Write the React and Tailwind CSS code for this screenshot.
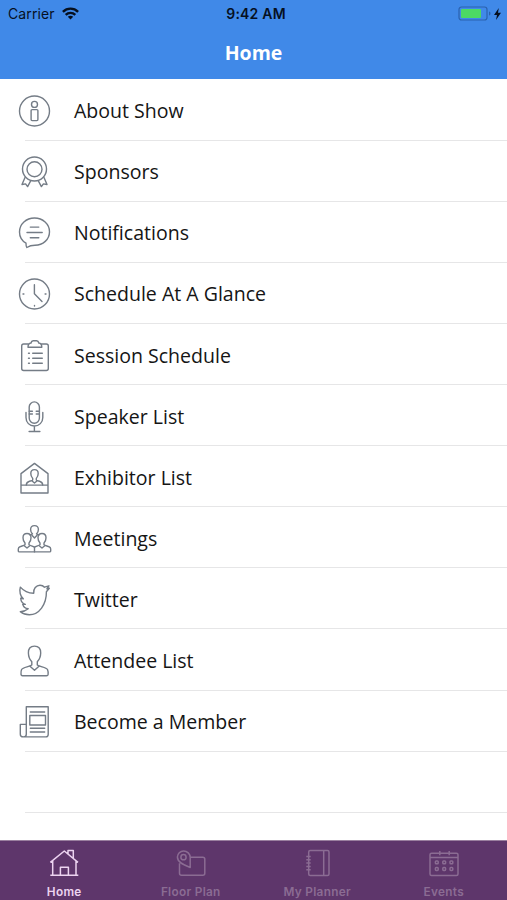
const ICONS = {
  about: (
    <>
      <circle cx="18" cy="18" r="15" />
      <circle cx="18" cy="11.400" r="3" />
      <rect x="14.600" y="16.600" width="6.800" height="11" rx="1" />
    </>
  ),
  sponsors: (
    <>
      <circle cx="18" cy="15" r="12" />
      <circle cx="18" cy="15.300" r="7.500" />
      <path d="M8.500 23.500l-3 7 3.600-.6 2 2.700 3.200-5.900M27.500 23.500l3 7-3.600-.6-2 2.700-3.200-5.900" />
    </>
  ),
  notifications: (
    <>
      <path d="M9.500 28.200C5.500 25.800 3 21.500 3 17 3 9 9.700 3 18 3s15 6 15 13.700-6.500 13.600-14.500 13.600c-2.500 0-5.200.3-8.200 2.200-.8-.8-.8-2.500-.8-4.300z" />
      <path d="M13.800 12.100h8.500M10.500 17.500h15.200M13.800 22.800h8.500" />
    </>
  ),
  clock: (
    <>
      <circle cx="18" cy="18" r="15" />
      <path d="M17.900 8.700v9l7.600 7.700M6.500 18h.9M28.600 18h.9M18 29.500v.6" />
    </>
  ),
  session: (
    <>
      <path d="M11.500 6H7.200c-1.200 0-2 .8-2 2v22.500c0 1.200.8 2 2 2h22.600c1.200 0 2-.8 2-2V8c0-1.200-.8-2-2-2h-4.600" />
      <path d="M11.500 9.300c0-3 .8-4.200 3-4.300.3-1.500 1-2.300 2.200-2.300h3.400c1.200 0 1.900.8 2.200 2.300 2.200.1 3 1.300 3 4.300z" />
      <path d="M12 15.300h.9M16.200 15.300h9.600M12 20.300h.9M16.200 20.300h9.600M12 25.300h.9M16.200 25.300h9.600" />
    </>
  ),
  mic: (
    <>
      <rect x="12.700" y="2.900" width="10.200" height="21.300" rx="5.100" />
      <path d="M9.500 13.500v5c0 5 3.500 8.500 8.300 8.500s8.500-3.500 8.500-8.500v-5M17.900 27v5.500M12.600 32.500h10.800M12.700 12.300h3.200M12.700 15h3.200M19.700 12.300h3.200M19.700 15h3.200" />
    </>
  ),
  exhibitor: (
    <>
      <path d="M18 3.400l13.500 10.200V33h-27V13.600zM4.500 25.100h27" />
      <path d="M9.800 25c.1-2.500 1-3.200 3.200-3.800 2-.5 3-.8 3.200-1.300v-1.500c-1.200-1.300-1.900-3-1.900-5 0-2.400 1.300-3.800 3.700-3.800s3.700 1.400 3.700 3.800c0 2-.7 3.700-1.900 5v1.500c.2.500 1.200.8 3.200 1.300 2.200.6 3.100 1.300 3.200 3.800M15.300 20.700L18 23l2.700-2.300" />
    </>
  ),
  meetings: (
    <>
      <path d="M10.500 12.500c-2.600 0-4 1.500-4 4.200 0 2.300.7 4 2 5.300v1.800c-1.500 1.200-5.500 1.300-6.300 2.800-.4.800-.5 2.300-.4 3.500.1.500.4.800 1 .8h30.400c.6 0 .9-.3 1-.8.1-1.200 0-2.700-.4-3.500-.8-1.500-4.800-1.600-6.300-2.800V22c1.300-1.300 2-3 2-5.300 0-2.700-1.400-4.200-4-4.200s-4 1.500-4 4.200c0 2.300.7 4 2 5.300v1.800c-1.200 1-4.500 1.200-5.500 2.500-1-1.300-4.300-1.500-5.500-2.500V22c1.300-1.300 2-3 2-5.300 0-2.700-1.400-4.200-4-4.200z" />
      <path d="M13.700 14c.8-.3 1.600-.6 2.300-1.100-1.200-1-1.900-2.300-1.900-4.300 0-2.600 1.400-4 3.900-4s3.900 1.400 3.900 4c0 2-.7 3.300-1.900 4.300.7.500 1.500.8 2.300 1.100M15.700 14.500L18 17l2.300-2.500M18 26.300v4.600M8 25l2.500 2 2.500-2M23 25l2.500 2 2.500-2" />
    </>
  ),
  twitter: (
    <path d="M3.900 5.100c3 3.500 7.600 6 13.300 6.200-.5-4.600 2.500-8.100 6.300-8.100 2.100 0 3.500.8 4.500 2l4.400-1.400-2 3 2.400-.5-2.900 3.500C30.100 22.500 22.500 32.800 12.800 32.800c-3.500 0-6.300-1-9-3.100 3.200 0 5.700-1 7.900-2.900-2.800-.2-4.700-1.800-5.500-4.400h2.600c-2.800-1-4.400-3.200-4.600-6.200l2.600.6C4 14.500 2.400 9.500 3.900 5.100z" />
  ),
  attendee: (
    <>
      <path d="M18 3.100c-4.400 0-6.300 2.800-6.100 6.800.1 4.200 1.500 6.800 3.400 8.800v3.300c-2.500 1.900-8.800 2.200-10.200 4.500-.6 1.200-.7 3.500-.6 4.900.1.900.6 1.400 1.500 1.400h24c.9 0 1.500-.5 1.600-1.400.1-1.500-.1-3.700-.6-4.900-1.300-2.300-7.700-2.600-10.200-4.500v-3.300c1.900-2 3.300-4.600 3.400-8.800.1-4-1.800-6.800-6.200-6.800z" />
      <path d="M13.500 23.200l4.500 4.100 4.500-4.100" />
    </>
  ),
  member: (
    <>
      <path d="M9.800 30V2.800h21.900V30.500c0 1.500-1 2.400-2.400 2.400H6.800c-1.800 0-3-1-3-2.700V20.400h6v9.800c0 1.500-1.200 2.700-3 2.700" />
      <path d="M13.800 8h14.400M13.800 24.200h14.400M13.800 28h14.400" />
      <rect x="13.300" y="11.500" width="15.700" height="9.500" />
    </>
  ),
};

const ROWS = [
  ["About Show", "about"],
  ["Sponsors", "sponsors"],
  ["Notifications", "notifications"],
  ["Schedule At A Glance", "clock"],
  ["Session Schedule", "session"],
  ["Speaker List", "mic"],
  ["Exhibitor List", "exhibitor"],
  ["Meetings", "meetings"],
  ["Twitter", "twitter"],
  ["Attendee List", "attendee"],
  ["Become a Member", "member"],
  ["", null],
];

const TABS = [
  [
    "Home",
    <path d="M2.300 14.400L16.300 3l13.700 11.400M4.700 12.500v14.800M28 12.500v14.800M2.300 27.300h28M12.400 27.300v-8h8v8M20 5.800V2.600h5.300v7.800" />,
  ],
  [
    "Floor Plan",
    <>
      <path d="M15.200 19.500c-5.500-2-12.800-4.700-12.800-10.400A6.200 6.200 0 0 1 8.600 3c3.600 0 6.600 2.800 6.600 6.500zM15.200 9.300h12.600c1.300 0 2 .7 2 2v14c0 1.300-.7 2-2 2H6.500c-1.300 0-2-.7-2-2v-10" />
      <circle cx="8.500" cy="9.200" r="2.600" />
    </>,
  ],
  [
    "My Planner",
    <>
      <rect x="7.700" y="2.500" width="20.300" height="25" rx="1.500" />
      <path d="M22.700 2.500v25M5.300 8.500h4.400M5.300 11.800h4.400M5.300 15.100h4.400M5.300 18.400h4.400M5.300 21.700h4.400" />
    </>,
  ],
  [
    "Events",
    <>
      <rect x="2" y="5.300" width="28" height="22.200" rx="1.500" />
      <path d="M2 9.500h28M11.800 3v4.300M21.200 3v4.300" />
      {[14.4, 21].map((y) =>
        [8.8, 16.2, 23.4].map((x) => (
          <rect key={`${x}-${y}`} x={x - 1.4} y={y - 1.4} width="2.800" height="2.800" rx=".8" />
        ))
      )}
    </>,
  ],
];

export default function App() {
  return (
    <div className="flex h-[900px] w-[507px] flex-col overflow-hidden bg-white">
      <header className="flex h-[79px] shrink-0 flex-col bg-[#4089e8]">
        <div className="grid h-[27px] grid-cols-3 items-center font-['Inter',sans-serif] text-[14px] leading-none text-[#06101f]">
          <div className="flex items-center gap-[7px] pl-[8px] tracking-[0.100px]">
            <span>Carrier</span>
            <svg width="17" height="13" viewBox="0 0 17 13" fill="none" stroke="currentColor" strokeWidth="2.400">
              <path d="M.9 4.800c4.300-4.200 10.900-4.200 15.200 0M3.700 7.800c2.700-2.600 6.900-2.600 9.600 0" />
              <path d="M8.500 12.500L5.800 9.700c1.500-1.300 3.900-1.300 5.400 0z" fill="currentColor" stroke="none" />
            </svg>
          </div>
          <div className="pl-[5px] pt-px text-center font-semibold tracking-[0.200px]">9:42 AM</div>
          <div className="flex items-center justify-end gap-[3px] pr-[6px]">
            <svg width="33" height="15" viewBox="0 0 33 15" fill="none">
              <rect x="1" y="1" width="28" height="13" rx="2.500" stroke="#2b62ae" strokeWidth="1.200" />
              <rect x="3" y="3" width="20" height="9" rx="1" fill="#4cd964" />
              <path d="M31 5.500v4c1-.4 1.500-1.100 1.500-2s-.5-1.600-1.500-2z" fill="#2b62ae" />
            </svg>
            <svg width="7" height="12" viewBox="0 0 7 12" fill="currentColor">
              <path d="M4.800 0L0 7h3L2 12l5-7.200H4z" />
            </svg>
          </div>
        </div>
        <h1 className="pt-[12px] text-center font-['Open_Sans',sans-serif] text-[19.500px] font-bold leading-[27px] text-white">
          Home
        </h1>
      </header>

      <main className="flex-1 overflow-hidden pt-[0.600px]">
        {ROWS.map(([label, icon], i) => (
          <div key={i} className="flex h-[61.100px] flex-col">
            <div className="flex flex-1 items-center pl-[16px] pt-[3px]">
              {icon && (
                <svg
                  width="36"
                  height="36"
                  viewBox="-0.500 0 36 36"
                  fill="none"
                  stroke="#747c86"
                  strokeWidth="1.400"
                  strokeLinejoin="round"
                  strokeLinecap="round"
                >
                  {ICONS[icon]}
                </svg>
              )}
              <span className="pl-[22px] font-['Open_Sans',sans-serif] text-[19.550px] leading-[28px] text-[#151515]">
                {label}
              </span>
            </div>
            <div className="ml-[25px] h-px bg-[#e6e6e7]" />
          </div>
        ))}
      </main>

      <nav className="grid h-[60px] shrink-0 grid-cols-4 border-t border-[#9a809f] bg-[#5e366b] pl-px">
        {TABS.map(([label, icon], i) => (
          <div
            key={label}
            className={`flex flex-col items-center pt-[7px] ${i === 0 ? "text-[#ecd3f0]" : "text-[#8b6c93]"}`}
          >
            <svg
              width="32"
              height="32"
              viewBox="0 0 32 32"
              fill="none"
              stroke="currentColor"
              strokeWidth="1.500"
              strokeLinejoin="round"
            >
              {icon}
            </svg>
            <span className="pt-[4px] font-['Inter',sans-serif] text-[11.800px] font-semibold leading-[16px] tracking-[0.300px]">
              {label}
            </span>
          </div>
        ))}
      </nav>
    </div>
  );
}
